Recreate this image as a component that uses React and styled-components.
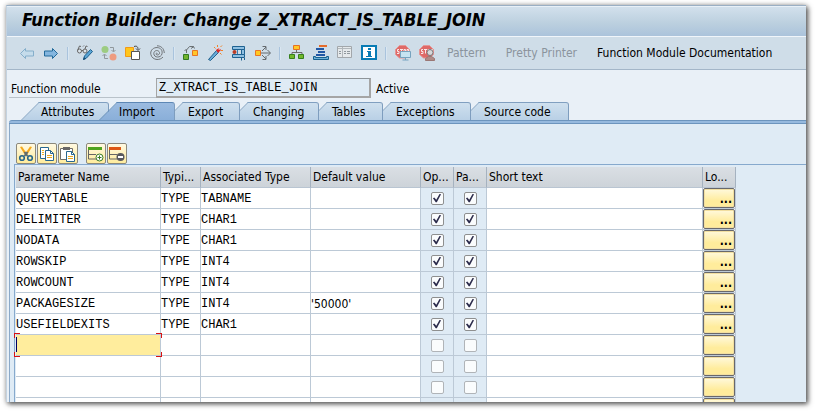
import React from "react";
import styled, { createGlobalStyle, css } from "styled-components";

const sans = '"DejaVu Sans Condensed", "DejaVu Sans", sans-serif';
const mono = '"Liberation Mono", monospace';

const Global = createGlobalStyle`
  * { box-sizing: border-box; }
  body { margin: 0; background: #fff; font: 12px/16px ${sans}; color: #000; }
  button, input { font: inherit; color: inherit; margin: 0; }
  button { padding: 0; border: 0; background: none; white-space: nowrap; }
`;

const Window = styled.main`
  display: flex;
  flex-direction: column;
  height: calc(100vh - 14px);
  margin: 5px 9px 9px 6px;
  overflow: hidden;
  background: #e9f0f7;
  border-top: 1px solid #9aafc4;
  border-left: 1px solid #c3d2e0;
  box-shadow: 2px 2px 5px #555, 0 0 5px #bbb;
`;

const TitleBar = styled.h1`
  flex: none;
  height: 31px;
  margin: 0;
  padding: 0 15px;
  border-top: 1px solid #e8f0f7;
  border-bottom: 1px solid #f0f5fa;
  background: linear-gradient(#d2e0ec, #bcd0df 55%, #abc3db);
  font-size: 18px;
  line-height: 25px;
  font-weight: bold;
  font-style: italic;
  white-space: nowrap;
`;

const Toolbar = styled.nav`
  flex: none;
  display: flex;
  align-items: center;
  gap: 8px;
  height: 33px;
  padding: 0 12px;
  background: #cfdde8;
  border-bottom: 1px solid #a3b6c8;
`;

const IconButton = styled.button`
  width: 16px;
  height: 16px;
  svg { display: block; }
`;

const Separator = styled.span`
  width: 2px;
  height: 13px;
  border-left: 1px solid #a9c3dd;
  border-right: 1px solid #d9e6f1;
`;

const TextButton = styled.button`
  margin-left: ${(p) => (p.$first ? 4 : 12)}px;
  color: ${(p) => (p.disabled ? "#8b949d" : "#000")};
`;

const FieldRow = styled.div`
  flex: none;
  display: flex;
  height: 20px;
  margin: 8px 0 4px 2px;
`;

const FieldLabel = styled.label`
  width: 147px;
  padding: 3px 2px 0;
  border-bottom: 1px solid #b9c2ca;
`;

const Field = styled.input`
  width: 215px;
  padding: 0 2px;
  border: 1px solid #a5a5a5;
  border-top-color: #8e9499;
  border-width: 1px 2px 2px 1px;
  background: #dfebf5;
  font-family: ${mono};
  outline: 0;
`;

const Status = styled.span`
  padding: 3px 5px 0;
`;

const Tabs = styled.div`
  flex: none;
  display: flex;
  height: 18px;
  padding-left: 24px;
`;

const tabFace = css`
  content: "";
  position: absolute;
  z-index: -1;
  top: 0;
  bottom: 0;
  border-top: 1px solid ${(p) => (p.$active ? "#5d87b5" : "#809fc0")};
  background: ${(p) =>
    p.$active ? "linear-gradient(#9bbbe0, #8aafd9)" : "linear-gradient(#cfe0ee, #b9d0e6)"};
`;

const Tab = styled.button`
  position: relative;
  isolation: isolate;
  z-index: ${(p) => (p.$active ? 20 : p.$level)};
  width: ${(p) => p.$width}px;
  margin-left: -10px;
  padding: 2px 0 0 ${(p) => (p.$indented ? 23 : 20)}px;
  text-align: left;
  &::before {
    ${tabFace}
    left: 9px;
    width: 22px;
    border-left: 1px solid ${(p) => (p.$active ? "#5d87b5" : "#809fc0")};
    transform: skewX(-45deg);
  }
  &::after {
    ${tabFace}
    left: 19px;
    right: 0;
    border-right: 1px solid #7e9dbe;
    border-radius: 0 3px 0 0;
  }
`;

const TabBar = styled.div`
  flex: none;
  height: 4px;
  margin-left: 2px;
  border: 1px solid #6c94bd;
  border-width: 1px 0;
  border-top-left-radius: 3px;
  background: #96b9de;
`;

const Panel = styled.section`
  flex: 1;
  min-height: 0;
  margin-left: 2px;
  padding: 19px 0 0 4px;
  overflow: hidden;
  border-left: 1px solid #8ba9c8;
  background: #dfebf5;
`;

const GridTools = styled.div`
  display: flex;
  gap: 1px;
  padding-left: 2px;
`;

const ToolButton = styled.button`
  display: flex;
  align-items: center;
  justify-content: center;
  width: 20px;
  height: 21px;
  margin-left: ${(p) => (p.$gap ? 7 : 0)}px;
  border: 1px solid #8c897c;
  border-radius: 2px;
  background: linear-gradient(#fff9e2, #ffec9c);
`;

const Grid = styled.div`
  padding: 2px 0 0 1px;
  border-top: 1px solid #86a9cd;
  border-left: 1px solid #86a9cd;
`;

const Table = styled.table`
  width: 720px;
  table-layout: fixed;
  border-spacing: 0;
  white-space: nowrap;
`;

const Col = styled.col`
  width: ${(p) => p.$width}px;
`;

const HeadCell = styled.th`
  height: 21px;
  padding: 0 2px;
  border-right: 1px solid #a5b2c0;
  border-bottom: 1px solid #b9c5d2;
  background: linear-gradient(#dadfe4, #cdd3d9);
  font-weight: normal;
  text-align: left;
`;

const Cell = styled.td`
  height: 21px;
  padding: ${(p) => (p.$flush ? 0 : "1px 0 0")};
  border-right: 1px solid #bcc9d6;
  border-bottom: 1px solid #bcc9d6;
  background: ${(p) => (p.$tinted ? "#dfebf5" : "#fff")};
  font-family: ${(p) => (p.$sans ? sans : mono)};
  line-height: 16px;
`;

const Tick = styled.input`
  appearance: none;
  display: block;
  width: 13px;
  height: 13px;
  margin: 0 auto;
  border: 1px solid ${(p) => (p.$faint ? "#b0b4b8" : "#8e8f8f")};
  border-radius: 2px;
  background: #fafcfd;
  &:checked::before {
    content: "";
    display: block;
    width: 9px;
    height: 9px;
    margin: 1px;
    background: #2c2c4c;
    clip-path: polygon(5% 52%, 20% 45%, 42% 70%, 78% 5%, 95% 8%, 48% 96%, 36% 96%);
  }
`;

const RowButton = styled.button`
  display: block;
  width: 100%;
  height: 20px;
  padding: 2px 2px 0 0;
  border: 1px solid #68686c;
  border-radius: 2px;
  background: linear-gradient(#fff9dd, #ffec9c 65%);
  box-shadow: inset 0 0 0 1px #f2dfa0;
  font-weight: bold;
  line-height: 14px;
  text-align: right;
`;

const ActiveCell = styled.div`
  position: relative;
  display: flex;
  height: 20px;
  background: #ffed9d;
`;

const CellInput = styled.input`
  width: 100%;
  border: 0;
  padding: 0 1px;
  background: none;
  font-family: ${mono};
  caret-color: transparent;
  outline: 0;
`;

const Caret = styled.span`
  position: absolute;
  left: 0;
  top: 2px;
  width: 1px;
  height: 15px;
  background: #000060;
`;

const Corner = styled.span`
  position: absolute;
  width: 6px;
  height: 5px;
  border-color: #d91212;
  border-style: solid;
  border-width: ${(p) => (p.$bottom ? "0" : "1px")} ${(p) => (p.$right ? "1px" : "0")}
    ${(p) => (p.$bottom ? "1px" : "0")} ${(p) => (p.$right ? "0" : "1px")};
  ${(p) => (p.$right ? "right: -2px;" : "left: -2px;")}
  ${(p) => (p.$bottom ? "bottom: -2px;" : "top: -2px;")}
`;

const Icon = ({ children }) => (
  <svg width="16" height="16" viewBox="0 0 16 16" fill="none" aria-hidden="true">{children}</svg>
);

const StopSign = () => (
  <>
    <path d="M4.500.5h6l4 4v5l-4 3.500h-6l-4-3.500v-5z" fill="#df6967" stroke="#e39695" />
    <path d="M4 4.500H2.500v2H4v2H2M5 4.500h3M6.500 4.500v4M9 4.500h1.500v4H9zM12 8.500v-4h1.500v2H12" stroke="#f9e9e9" />
  </>
);

const icons = {
  back: <path d="M1.500 8.500l5-5v2.500h8v5h-8v2.500z" fill="#c5dceb" stroke="#85afcb" />,
  forward: <path d="M14.500 8.500l-5-5v2.500h-8v5h8v2.500z" fill="#84b6df" stroke="#226a9b" />,
  toggle: (
    <>
      <path d="M.5 5.500L2.500 1l1.500.5M6 1.500l1-1M8 4l1-3 1.500.5" stroke="#666" />
      <circle cx="2.500" cy="6" r="2" fill="#dce5ec" stroke="#666" />
      <circle cx="8" cy="6" r="2" fill="#dce5ec" stroke="#666" />
      <path d="M4.500 5.500h1.500" stroke="#666" />
      <path d="M6.500 14.500l1-3.500 6-6.500 2 2-6 6.500z" fill="#5aa5d5" stroke="#1e608d" />
      <path d="M6 15l1-3 2 2z" fill="#174d76" />
    </>
  ),
  activate: (
    <>
      <circle cx="4" cy="4.500" r="3.500" fill="#9dcc82" />
      <circle cx="12" cy="12" r="3.500" fill="#ee9b80" />
      <path d="M9 2.500h3.500v4M10.500 5l2 2 2-2M7 13.500H3.500v-4M1.500 11l2-2 2 2" stroke="#91989d" />
    </>
  ),
  other: (
    <>
      <path d="M.5 2.500h8v9h-8z" fill="#ffc61c" stroke="#f29a16" />
      <path d="M6.500 6.500h8v8h-8z" fill="#fff" stroke="#555" />
      <path d="M9 1.500c3-1 4 .5 4 3M11 3.500l2 2 2-2" stroke="#444" />
    </>
  ),
  spiral: (
    <path
      d="M8.500 8.500c-.8-1-2 .2-1.200 1 1.500 1.300 3.700-.2 3.200-2C9.500 4.500 5 5 4.800 8.500c0 4.500 7.200 4.800 8.200.3C14 4 10 2.200 7 2.600 3.500 3 1.200 6 1.800 9.300c.7 3.200 3.200 5 6.200 5.200 2.500 0 4.500-.8 6-2.500M15.300 8C15 3 11.500 .8 8 .8"
      stroke="#707478"
    />
  ),
  hierarchy: (
    <>
      <path d="M.5 9.500h5v5h-5z" fill="#72b32e" stroke="#317b21" />
      <path d="M9.500 5.500h5v5h-5z" fill="#ffc629" stroke="#e87524" />
      <path d="M3.500 8V5l3-3.500h4l1 2M1.500 6l2-2M8 3.500l3-2" stroke="#6b7174" />
    </>
  ),
  wand: (
    <>
      <path d="M1.500 14.500l8-9 2 2-8 8z" fill="#68aad8" stroke="#20618d" />
      <path d="M9 5l3-2 2 2-3 3z" fill="#df2724" />
      <path d="M10.500 0v2M15 .5l-1.500 1.500M16 5.500h-2M13 8l1.500 1.500M7 2l1.500 1.500" stroke="#f18327" />
      <path d="M11.500 4h1.500" stroke="#fff" />
    </>
  ),
  whereUsed: (
    <>
      <path d="M1.500 1.500h12v3h-12z" fill="#8fc0e2" stroke="#1f6291" />
      <path d="M1.500 9.500h12v3h-12z" fill="#8fc0e2" stroke="#1f6291" />
      <path d="M10.500 4.500h3v5h-3z" fill="#8fc0e2" stroke="#1f6291" />
      <path d="M10.500 13v2.500M13.500 13v2" stroke="#1f6291" />
      <path d="M6.500 5v4" stroke="#3980b2" />
      <circle cx="3.500" cy="7" r="2" fill="#ba3e28" />
    </>
  ),
  navigate: (
    <>
      <path d="M.5 5.500h5v5h-5z" fill="#ffc921" stroke="#ea7525" />
      <path d="M6 8h9M12.500 5l3 3-3 3M7 6l4-4M7.500 1.500H11V5M7 10l4 4M7.500 14.500H11V11" stroke="#656b6f" />
    </>
  ),
  tree: (
    <>
      <path d="M4.500.5h6v4h-6z" fill="#ffc926" stroke="#e67025" />
      <path d="M7.500 5v3M3 10V7.500h10V10" stroke="#696969" />
      <path d="M.5 9.500h5v4h-5zM9.500 9.500h5v4h-5z" fill="#72b72c" stroke="#35801d" />
    </>
  ),
  stack: (
    <>
      <path d="M6 0h8v2H6z" fill="#e56c2c" />
      <path d="M3 3h8v2H3zM5 6h7v2H5zM3 9h9v2H3z" fill="#2158a5" />
      <path d="M.5 11.500v3h15v-3h-2v1h-11v-1z" fill="#6eb1d9" stroke="#17618e" />
    </>
  ),
  list: (
    <>
      <path d="M.5 1.500h14v11H.5z" fill="#e5e9eb" stroke="#a2a7ab" />
      <path d="M1 3.500h13M5.500 2v10" stroke="#b2b7bb" />
      <path d="M2 6.500h2M2 8.500h2M7 6.500h2M10 6.500h3M7 8.500h2M10 8.500h3" stroke="#8f979c" />
    </>
  ),
  info: (
    <>
      <path d="M1 1h14v13H1z" fill="#fff" stroke="#087bb4" strokeWidth="2" />
      <path d="M7 3h3v2H7zM6 6h4v5h1v1H5v-1h2V7H6z" fill="#087bb4" />
    </>
  ),
  stopScreen: (
    <>
      <StopSign />
      <path d="M5.500 6.500h10v6h-10z" fill="#c6e3f2" stroke="#76a3bf" />
      <path d="M10.500 13v2M7.500 15h6" stroke="#76a3bf" />
    </>
  ),
  stopUser: (
    <>
      <StopSign />
      <path d="M6.500 15.500v-2l3-2h3l3 2v2z" fill="#b08b87" stroke="#9a7774" />
      <circle cx="11" cy="7.500" r="3" fill="#d7d8da" stroke="#77797c" />
    </>
  ),
  cut: (
    <>
      <path d="M2 1l2-.5 4 6 4-6 2 .5-5 8H7z" fill="#f5a81b" />
      <path d="M6.500 10L9.500 6M9.500 10L6.500 6" stroke="#5f6d72" strokeWidth="2" />
      <circle cx="4" cy="12" r="2.300" stroke="#28678b" strokeWidth="1.600" />
      <circle cx="12" cy="12" r="2.300" stroke="#28678b" strokeWidth="1.600" />
    </>
  ),
  copy: (
    <>
      <path d="M1.500 1.500h8v11h-8z" fill="#fff" stroke="#28678f" />
      <path d="M3 4.500h2M3 6.500h2M3 8.500h2" stroke="#f0b323" />
      <path d="M6.500 4.500h5l3 3v7h-8z" fill="#fff" stroke="#28678f" />
      <path d="M11.500 4.500v3h3" stroke="#28678f" />
      <path d="M8 9.500h5M8 11.500h5" stroke="#e8a820" />
    </>
  ),
  paste: (
    <>
      <path d="M.5 2.500h12v11H.5z" fill="#fff" stroke="#706e6a" />
      <path d="M3 1h7v3H3z" fill="#696765" />
      <path d="M6.500 5.500h5l3 3v7h-8z" fill="#fff" stroke="#28678f" />
      <path d="M11.500 5.500v3h3" stroke="#28678f" />
      <path d="M8 10.500h5M8 12.500h5" stroke="#e8a820" />
    </>
  ),
  insertRow: (
    <>
      <path d="M.5 1v12H8M.5 8.500H8" stroke="#666" />
      <path d="M0 1h14v3H0z" fill="#4fa31d" />
      <circle cx="11.500" cy="11.500" r="3.500" fill="#fff" stroke="#397b24" />
      <path d="M9.500 11.500h4M11.500 9.500v4" stroke="#397b24" />
    </>
  ),
  deleteRow: (
    <>
      <path d="M.5 1v12H8M.5 8.500H8" stroke="#666" />
      <path d="M0 1h12v3H0z" fill="#dd5715" />
      <circle cx="11.500" cy="11" r="4" fill="#58585c" />
      <path d="M9 11h5" stroke="#fff" strokeWidth="2" />
    </>
  ),
};

const toolbarItems = [
  ["back", "Back"], ["forward", "Forward"], null,
  ["toggle", "Display/Change"], ["activate", "Active/Inactive"], ["other", "Other object"], ["spiral", "Enhance"], null,
  ["hierarchy", "Check"], ["wand", "Activate"], ["whereUsed", "Test"], ["navigate", "Where-used list"], null,
  ["tree", "Object list"], ["stack", "Navigation stack"], ["list", "Full screen"], ["info", "Help"], null,
  ["stopScreen", "Session breakpoint"], ["stopUser", "External breakpoint"],
];

const tabs = [
  ["Attributes", 88], ["Import", 76], ["Export", 75], ["Changing", 89],
  ["Tables", 74], ["Exceptions", 98], ["Source code", 108],
];

const columns = [
  ["Parameter Name", 145], ["Typi...", 40], ["Associated Type", 110], ["Default value", 110],
  ["Op...", 33], ["Pa...", 33], ["Short text", 216], ["Lo...", 33],
];

const rows = [
  ["QUERYTABLE", "TABNAME"], ["DELIMITER", "CHAR1"], ["NODATA", "CHAR1"], ["ROWSKIP", "INT4"],
  ["ROWCOUNT", "INT4"], ["PACKAGESIZE", "INT4", "'50000'"], ["USEFIELDEXITS", "CHAR1"],
  null, null, null, null,
];

const gridTools = [
  ["cut", "Cut"], ["copy", "Copy"], ["paste", "Paste"], ["insertRow", "Insert row"], ["deleteRow", "Delete row"],
];

function ParameterRow({ row, active }) {
  const filled = Boolean(row);
  const [name, type, value] = row || [];
  return (
    <tr>
      <Cell $flush={active}>
        {active ? (
          <ActiveCell>
            <CellInput aria-label="Parameter Name" />
            <Caret />
            <Corner /><Corner $right /><Corner $bottom /><Corner $right $bottom />
          </ActiveCell>
        ) : name}
      </Cell>
      <Cell>{filled && "TYPE"}</Cell>
      <Cell>{type}</Cell>
      <Cell $sans>{value}</Cell>
      <Cell $tinted $flush><Tick type="checkbox" aria-label="Optional" defaultChecked={filled} $faint={!filled} /></Cell>
      <Cell $tinted $flush><Tick type="checkbox" aria-label="Pass by value" defaultChecked={filled} $faint={!filled} /></Cell>
      <Cell />
      <Cell $flush $sans><RowButton type="button" aria-label="Long text">{filled && "..."}</RowButton></Cell>
    </tr>
  );
}

export default function App() {
  return (
    <>
      <Global />
      <Window>
        <TitleBar>Function Builder: Change Z_XTRACT_IS_TABLE_JOIN</TitleBar>
        <Toolbar>
          {toolbarItems.map((item, i) =>
            item ? (
              <IconButton key={i} type="button" aria-label={item[1]}><Icon>{icons[item[0]]}</Icon></IconButton>
            ) : (
              <Separator key={i} />
            )
          )}
          <TextButton type="button" disabled $first>Pattern</TextButton>
          <TextButton type="button" disabled>Pretty Printer</TextButton>
          <TextButton type="button">Function Module Documentation</TextButton>
        </Toolbar>
        <FieldRow>
          <FieldLabel htmlFor="module">Function module</FieldLabel>
          <Field id="module" readOnly value="Z_XTRACT_IS_TABLE_JOIN" />
          <Status>Active</Status>
        </FieldRow>
        <Tabs role="tablist">
          {tabs.map(([label, width], i) => (
            <Tab
              key={label}
              type="button"
              role="tab"
              aria-selected={i === 1}
              $active={i === 1}
              $indented={i > 1}
              $level={10 - i}
              $width={width}
            >
              {label}
            </Tab>
          ))}
        </Tabs>
        <TabBar />
        <Panel>
          <GridTools>
            {gridTools.map(([icon, label], i) => (
              <ToolButton key={icon} type="button" aria-label={label} $gap={i === 3}><Icon>{icons[icon]}</Icon></ToolButton>
            ))}
          </GridTools>
          <Grid>
            <Table>
              <colgroup>{columns.map(([label, width]) => <Col key={label} $width={width} />)}</colgroup>
              <thead>
                <tr>{columns.map(([label]) => <HeadCell key={label} scope="col">{label}</HeadCell>)}</tr>
              </thead>
              <tbody>{rows.map((row, i) => <ParameterRow key={i} row={row} active={i === 7} />)}</tbody>
            </Table>
          </Grid>
        </Panel>
      </Window>
    </>
  );
}
